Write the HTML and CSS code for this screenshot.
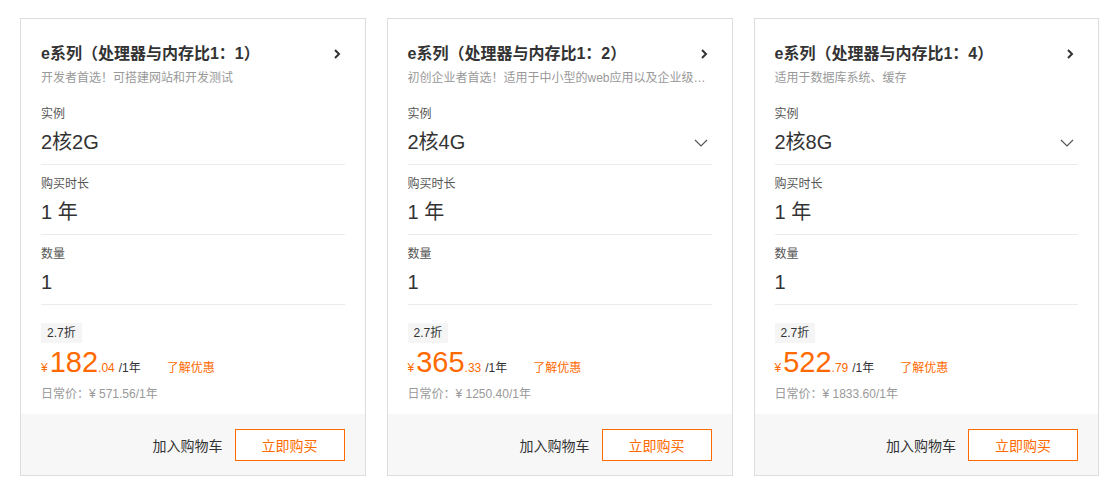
FILE: index.html
```html
<!DOCTYPE html>
<html lang="zh-CN">
<head>
  <meta charset="UTF-8">
  <title>e系列</title>
  <link rel="stylesheet" href="styles.css">
</head>
<body>
<div class="cards">
  <!-- 1:1 -->
  <div class="card">
    <div class="card-body">
      <div class="title">
        <span>e系列（处理器与内存比1：1）</span>
        <svg class="arrow" width="8" height="12" viewBox="0 0 8 12"><polyline points="2,2 6,6 2,10" fill="none" stroke="#333" stroke-width="2"/></svg>
      </div>
      <div class="desc">开发者首选！可搭建网站和开发测试</div>
      <div class="fields">
        <div class="field">
          <div class="label">实例</div>
          <div class="value">2核2G</div>
        </div>
        <div class="field">
          <div class="label">购买时长</div>
          <div class="value">1 年</div>
        </div>
        <div class="field">
          <div class="label">数量</div>
          <div class="value">1</div>
        </div>
      </div>
      <span class="tag">2.7折</span>
      <div class="price">
        <span class="yen">¥</span><span class="big">182</span><span class="dec">.04</span><span class="unit">/1年</span>
        <a class="promo">了解优惠</a>
      </div>
      <div class="origin">日常价：¥ 571.56/1年</div>
    </div>
    <div class="card-foot">
      <span class="cart">加入购物车</span>
      <button class="buy">立即购买</button>
    </div>
  </div>

  <!-- 1:2 -->
  <div class="card">
    <div class="card-body">
      <div class="title">
        <span>e系列（处理器与内存比1：2）</span>
        <svg class="arrow" width="8" height="12" viewBox="0 0 8 12"><polyline points="2,2 6,6 2,10" fill="none" stroke="#333" stroke-width="2"/></svg>
      </div>
      <div class="desc">初创企业者首选！适用于中小型的web应用以及企业级应用场景</div>
      <div class="fields">
        <div class="field">
          <div class="label">实例</div>
          <div class="value select">2核4G
            <svg width="14" height="8" viewBox="0 0 14 8"><polyline points="1,1 7,7 13,1" fill="none" stroke="#555" stroke-width="1.2"/></svg>
          </div>
        </div>
        <div class="field">
          <div class="label">购买时长</div>
          <div class="value">1 年</div>
        </div>
        <div class="field">
          <div class="label">数量</div>
          <div class="value">1</div>
        </div>
      </div>
      <span class="tag">2.7折</span>
      <div class="price">
        <span class="yen">¥</span><span class="big">365</span><span class="dec">.33</span><span class="unit">/1年</span>
        <a class="promo">了解优惠</a>
      </div>
      <div class="origin">日常价：¥ 1250.40/1年</div>
    </div>
    <div class="card-foot">
      <span class="cart">加入购物车</span>
      <button class="buy">立即购买</button>
    </div>
  </div>

  <!-- 1:4 -->
  <div class="card">
    <div class="card-body">
      <div class="title">
        <span>e系列（处理器与内存比1：4）</span>
        <svg class="arrow" width="8" height="12" viewBox="0 0 8 12"><polyline points="2,2 6,6 2,10" fill="none" stroke="#333" stroke-width="2"/></svg>
      </div>
      <div class="desc">适用于数据库系统、缓存</div>
      <div class="fields">
        <div class="field">
          <div class="label">实例</div>
          <div class="value select">2核8G
            <svg width="14" height="8" viewBox="0 0 14 8"><polyline points="1,1 7,7 13,1" fill="none" stroke="#555" stroke-width="1.2"/></svg>
          </div>
        </div>
        <div class="field">
          <div class="label">购买时长</div>
          <div class="value">1 年</div>
        </div>
        <div class="field">
          <div class="label">数量</div>
          <div class="value">1</div>
        </div>
      </div>
      <span class="tag">2.7折</span>
      <div class="price">
        <span class="yen">¥</span><span class="big">522</span><span class="dec">.79</span><span class="unit">/1年</span>
        <a class="promo">了解优惠</a>
      </div>
      <div class="origin">日常价：¥ 1833.60/1年</div>
    </div>
    <div class="card-foot">
      <span class="cart">加入购物车</span>
      <button class="buy">立即购买</button>
    </div>
  </div>
</div>
</body>
</html>
```

FILE: styles.css
```css
/* General */
body {
  margin: 0;
  font-family: "Liberation Sans", "Noto Sans CJK SC", sans-serif;
  color: #333;
  background: #fff;
}
.cards {
  display: flex;
  gap: 21px;
  padding: 18px 10px 0 20px;
}
.card {
  width: 346px;
  box-sizing: border-box;
  border: 1px solid #ddd;
}
.card-body {
  padding: 24px 20px 11px;
}
/* Header */
.title {
  display: flex;
  justify-content: space-between;
  align-items: center;
  font-size: 16px;
  font-weight: bold;
  line-height: 22px;
  color: #333;
}
.arrow {
  margin-right: 4px;
}
.desc {
  margin-top: 4px;
  font-size: 12px;
  line-height: 18px;
  color: #999;
  white-space: nowrap;
  overflow: hidden;
  text-overflow: ellipsis;
}
/* Fields */
.fields {
  margin-top: 8px;
}
.field {
  padding: 10px 0 8px;
  border-bottom: 1px solid #ebebeb;
}
.label {
  font-size: 12px;
  line-height: 18px;
  color: #555;
}
.value {
  margin-top: 6px;
  font-size: 20px;
  line-height: 27px;
  color: #333;
}
.value.select {
  display: flex;
  justify-content: space-between;
  align-items: center;
}
.value.select svg {
  margin-right: 4px;
}
/* Price */
.tag {
  display: inline-block;
  margin-top: 18px;
  padding: 0 6px;
  font-size: 12px;
  line-height: 20px;
  background: #f5f5f5;
  color: #333;
}
.price {
  display: flex;
  align-items: baseline;
  margin-top: 3px;
  line-height: 32px;
  color: #ff6a00;
}
.yen {
  font-size: 12px;
  margin-right: 2px;
}
.big {
  font-size: 29px;
}
.dec {
  font-size: 12px;
  margin-right: 4px;
}
.unit {
  font-size: 12px;
  color: #333;
}
.promo {
  margin-left: 26px;
  font-size: 12px;
  color: #ff6a00;
}
.origin {
  margin-top: 1px;
  font-size: 12px;
  line-height: 18px;
  color: #999;
}
/* Footer */
.card-foot {
  display: flex;
  justify-content: flex-end;
  align-items: center;
  gap: 12px;
  height: 61px;
  padding: 0 20px;
  background: #f7f7f7;
}
.cart {
  font-size: 14px;
  color: #333;
}
.buy {
  width: 110px;
  height: 32px;
  border: 1px solid #ff6a00;
  background: #fff;
  color: #ff6a00;
  font-family: inherit;
  font-size: 14px;
  cursor: pointer;
}
```
